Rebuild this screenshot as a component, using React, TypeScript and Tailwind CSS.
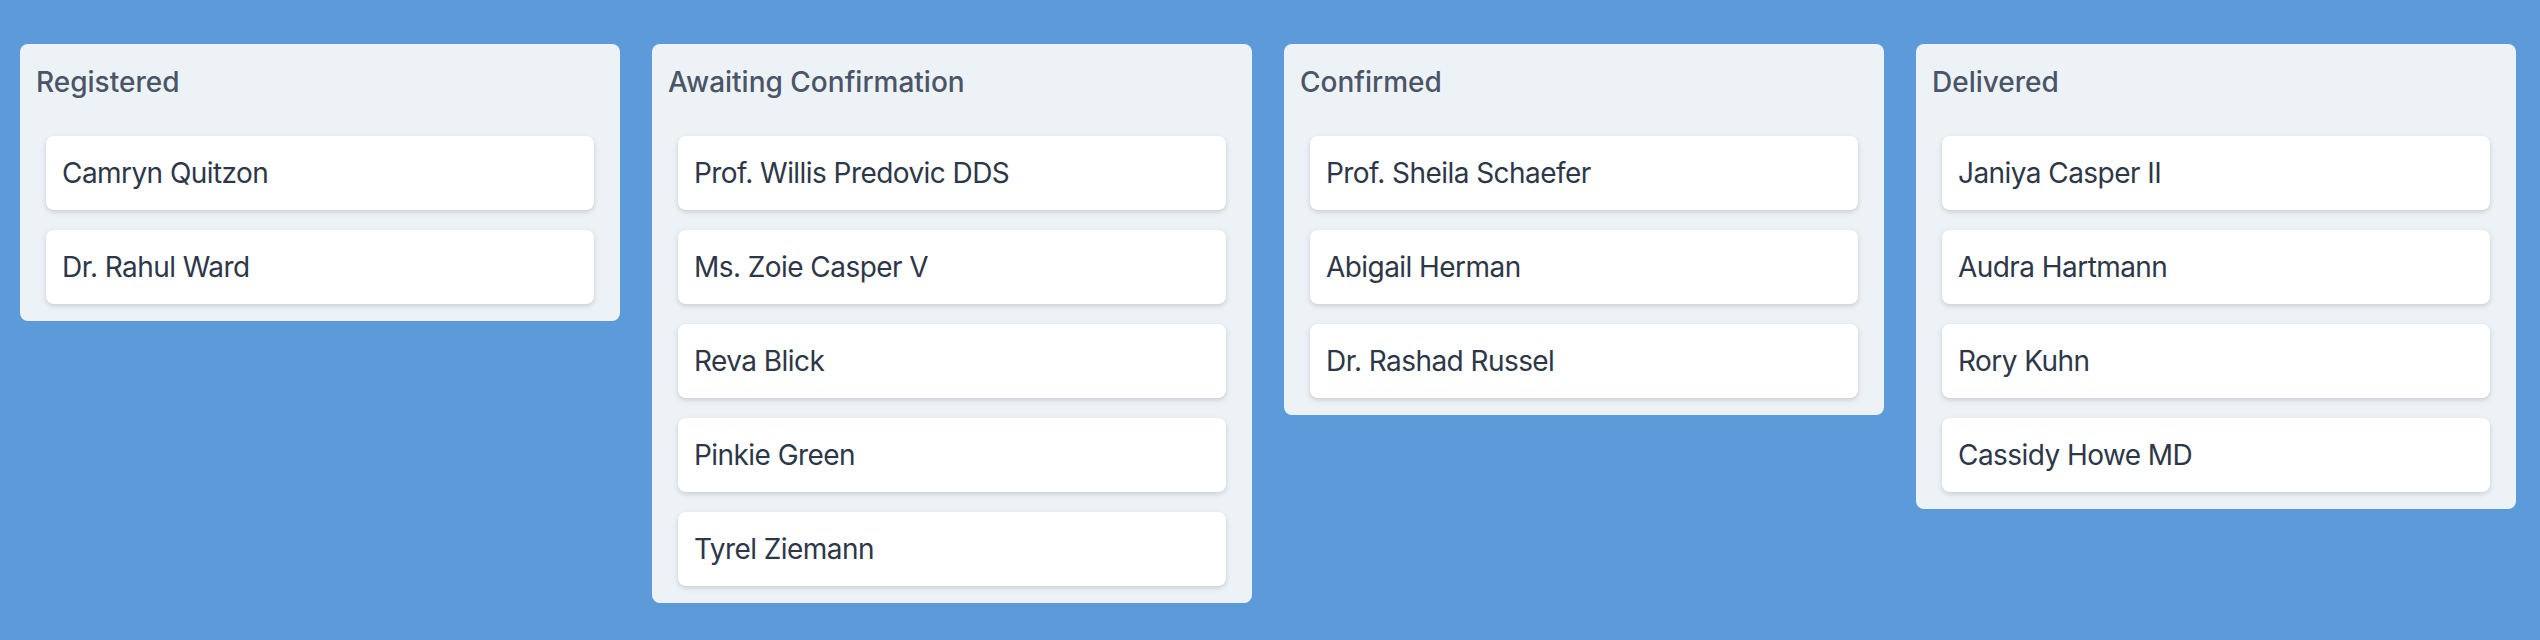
const COLUMNS = [
  { title: "Registered", items: ["Camryn Quitzon", "Dr. Rahul Ward"] },
  {
    title: "Awaiting Confirmation",
    items: [
      "Prof. Willis Predovic DDS",
      "Ms. Zoie Casper V",
      "Reva Blick",
      "Pinkie Green",
      "Tyrel Ziemann",
    ],
  },
  {
    title: "Confirmed",
    items: ["Prof. Sheila Schaefer", "Abigail Herman", "Dr. Rashad Russel"],
  },
  {
    title: "Delivered",
    items: ["Janiya Casper II", "Audra Hartmann", "Rory Kuhn", "Cassidy Howe MD"],
  },
];

export default function App() {
  return (
    <div className="min-h-[640px] bg-[#5c9ad9] px-5 pt-[44px] font-['Inter',sans-serif]">
      <div className="flex items-start gap-8">
        {COLUMNS.map((col) => (
          <div
            key={col.title}
            className="w-[600px] shrink-0 rounded-lg bg-[#edf2f7] px-4 pt-[18px] pb-[17px]"
          >
            <h2 className="text-[28px] leading-[40px] font-medium text-[#4a5568]">
              {col.title}
            </h2>
            <div className="mt-[34px] flex flex-col gap-5 px-[10px]">
              {col.items.map((name) => (
                <div
                  key={name}
                  className="flex h-[74px] items-center rounded-lg bg-white px-4 text-[28px] leading-[40px] tracking-[-0.02em] text-[#2d3748] shadow-[0_2px_6px_rgba(0,0,0,0.1),0_2px_4px_rgba(0,0,0,0.06)]"
                >
                  {name}
                </div>
              ))}
            </div>
          </div>
        ))}
      </div>
    </div>
  );
}
